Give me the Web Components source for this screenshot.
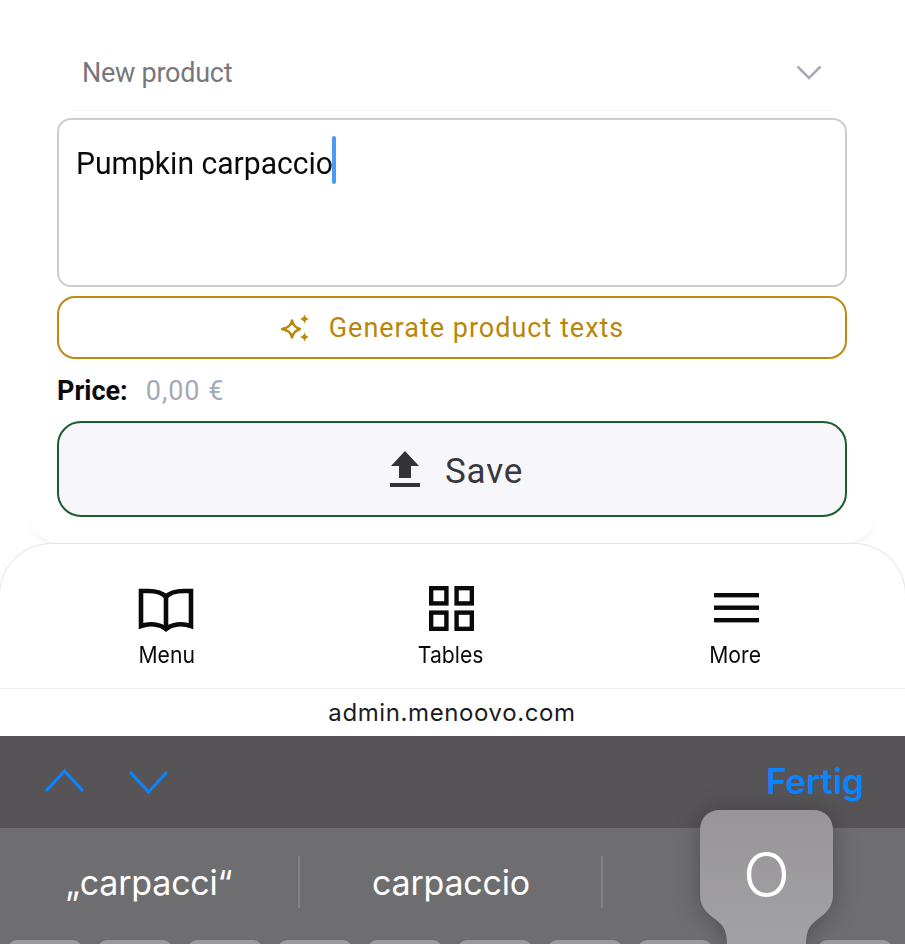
<!DOCTYPE html>
<html lang="en">
<head>
<meta charset="utf-8">
<title>Menoovo admin</title>
<style>
  html, body { margin: 0; padding: 0; background: #fff; }
  body { width: 905px; height: 944px; overflow: hidden; font-family: "Inter", "Liberation Sans", sans-serif; }
  .page { display: flex; flex-direction: column; height: 944px; overflow: hidden; position: relative; }
</style>
</head>
<body>
<div class="page">
  <product-form>
    <product-header>New product</product-header>
    <product-text>Pumpkin carpaccio</product-text>
    <ai-button>Generate product texts</ai-button>
    <price-row label="Price:" value="0,00 €"></price-row>
    <save-button>Save</save-button>
  </product-form>
  <bottom-nav>
    <nav-item icon="book">Menu</nav-item>
    <nav-item icon="grid">Tables</nav-item>
    <nav-item icon="bars">More</nav-item>
  </bottom-nav>
  <url-bar>admin.menoovo.com</url-bar>
  <kb-accessory></kb-accessory>
  <kb-suggestions></kb-suggestions>
  <key-popup>O</key-popup>
</div>
<script>
const APP_FONT = '"Roboto", "Liberation Sans", sans-serif';
const UI_FONT = '"Inter", "Liberation Sans", sans-serif';

const ICONS = {
  book: '<svg style="margin:4px 2px 0 0" width="56" height="44" viewBox="0 0 56 44" fill="none" stroke="#0a0a0a" stroke-width="4.6"><path d="M28 9C24 4 17 3 10 3H3V38C12 35 22 36 28 41C34 36 44 35 53 38V3H46C39 3 32 4 28 9V41"/></svg>',
  grid: '<svg width="45" height="45" viewBox="0 0 46 46" fill="none" stroke="#0a0a0a" stroke-width="4.5"><rect x="2.2" y="2.2" width="15.6" height="15.6"/><rect x="28.2" y="2.2" width="15.6" height="15.6"/><rect x="2.2" y="27.2" width="15.6" height="16.6"/><rect x="28.2" y="27.2" width="15.6" height="16.6"/></svg>',
  bars: '<svg style="margin-left:2px" width="45" height="46" viewBox="0 0 45 46" fill="#0a0a0a"><rect y="8" width="45" height="4.4"/><rect y="20.5" width="45" height="4.4"/><rect y="33" width="45" height="4.4"/></svg>'
};

class ProductForm extends HTMLElement {
  constructor() {
    super();
    this.attachShadow({ mode: 'open' }).innerHTML = `
      <style>
        :host { display: block; height: 543px; flex: none; overflow: hidden; font-family: ${APP_FONT}; }
        .card {
          box-sizing: border-box; height: 543px; margin: 0 30px; padding: 44px 28px 0 27px;
          background: #fff; border-radius: 0 0 30px 30px;
          box-shadow: 0 12px 14px -10px rgba(222, 214, 238, .8);
          display: flex; flex-direction: column;
        }
      </style>
      <div class="card"><slot></slot></div>`;
  }
}

class ProductHeader extends HTMLElement {
  constructor() {
    super();
    this.attachShadow({ mode: 'open' }).innerHTML = `
      <style>
        :host {
          display: flex; align-items: center; justify-content: space-between; box-sizing: border-box;
          height: 67px; margin: 0 15px 7px; padding: 0 10px 8px; border-bottom: 1px solid #f4f4f6;
          color: #77777c; font-size: 27px; letter-spacing: -.25px;
        }
        svg { display: block; }
      </style>
      <slot></slot>
      <svg width="26" height="16" viewBox="0 0 26 16" fill="none" stroke="#a6acbb" stroke-width="2.6"><path d="M1.5 1.5L13 13L24.5 1.5"/></svg>`;
  }
}

class ProductText extends HTMLElement {
  constructor() {
    super();
    this.attachShadow({ mode: 'open' }).innerHTML = `
      <style>
        :host {
          display: flex; align-items: flex-start; box-sizing: border-box; height: 169px; padding: 16px 17px;
          border: 2px solid #cdcdd0; border-radius: 14px; background: #fff;
          color: #0a0a0a; font-size: 32px; line-height: 48px; white-space: nowrap;
        }
        /* the real font runs narrower than Roboto */
        span { display: block; margin: 3px -17px 0 0; transform: scaleX(.94); transform-origin: left; }
        i { display: block; width: 3.5px; height: 48px; background: #4a9bf5; border-radius: 2px; }
      </style>
      <span><slot></slot></span><i></i>`;
  }
}

class AiButton extends HTMLElement {
  constructor() {
    super();
    this.attachShadow({ mode: 'open' }).innerHTML = `
      <style>
        :host {
          display: flex; align-items: center; justify-content: center; gap: 18px; box-sizing: border-box;
          height: 63px; margin-top: 9px; padding-top: 1px; border: 2px solid #bf8a10; border-radius: 18px;
          color: #b8860b; font-size: 27px; letter-spacing: 1px;
        }
        svg { display: block; margin-top: -1px; }
      </style>
      <svg width="31" height="30" viewBox="0 0 31 30" fill="none" stroke-linejoin="round">
        <path d="M12 7.5C13 12 15 14.5 20 16C15 17.5 13 20 12 24.5C11 20 9 17.5 2 16C9 14.5 11 12 12 7.5Z" stroke="#b8860b" stroke-width="2.4"/>
        <path d="M24.5 1C25 4 26 5.2 29 6C26 6.8 25 8 24.5 11C24 8 23 6.8 20 6C23 5.2 24 4 24.5 1Z" fill="#b8860b"/>
        <path d="M24.5 19C25 22 26 23.2 29 24C26 24.8 25 26 24.5 29C24 26 23 24.8 20 24C23 23.2 24 22 24.5 19Z" fill="#b8860b"/>
      </svg>
      <span><slot></slot></span>`;
  }
}

class PriceRow extends HTMLElement {
  constructor() {
    super();
    this.attachShadow({ mode: 'open' }).innerHTML = `
      <style>
        :host { display: flex; align-items: center; gap: 18px; height: 62px; font-size: 27px; box-sizing: border-box; padding-top: 1px; }
        b { color: #0a0a0a; font-weight: 700; }
        span { color: #a4a9b8; letter-spacing: 1px; }
      </style>
      <b></b><span></span>`;
    this.shadowRoot.querySelector('b').textContent = this.getAttribute('label');
    this.shadowRoot.querySelector('span').textContent = this.getAttribute('value');
  }
}

class SaveButton extends HTMLElement {
  constructor() {
    super();
    this.attachShadow({ mode: 'open' }).innerHTML = `
      <style>
        :host {
          display: flex; align-items: center; justify-content: center; gap: 24px; box-sizing: border-box;
          height: 96px; padding-left: 8px; border: 2px solid #1d5c2e; border-radius: 24px;
          background: #f7f6fa; color: #39383d; font-size: 35px; letter-spacing: .8px;
        }
        svg { display: block; }
        span { margin-top: 4px; }
      </style>
      <svg width="32" height="37" viewBox="0 0 32 37" fill="#333237"><path d="M16 0L30 15H22V27H10V15H2Z"/><rect x="1" y="32" width="30" height="4"/></svg>
      <span><slot></slot></span>`;
  }
}

class BottomNav extends HTMLElement {
  constructor() {
    super();
    this.attachShadow({ mode: 'open' }).innerHTML = `
      <style>
        :host {
          display: flex; box-sizing: border-box; height: 145px; flex: none; margin: 0 -1px; padding: 38px 30px 0 27px;
          justify-content: space-between;
          background: #fff; border: 1px solid #e6e5ef; border-bottom: 0; border-radius: 52px 52px 0 0;
        }
      </style>
      <slot></slot>`;
  }
}

class NavItem extends HTMLElement {
  constructor() {
    super();
    this.attachShadow({ mode: 'open' }).innerHTML = `
      <style>
        :host { display: flex; flex-direction: column; align-items: center; width: 279px; color: #0a0a0a; font-family: ${UI_FONT}; font-size: 23px; }
        .ic { height: 52px; display: flex; align-items: center; justify-content: center; }
        .lb { margin-top: 7px; line-height: 28px; transform: scaleX(.92); }
        svg { display: block; }
      </style>
      <div class="ic"></div><div class="lb"><slot></slot></div>`;
    this.shadowRoot.querySelector('.ic').innerHTML = ICONS[this.getAttribute('icon')];
  }
}

class UrlBar extends HTMLElement {
  constructor() {
    super();
    this.attachShadow({ mode: 'open' }).innerHTML = `
      <style>
        :host {
          display: flex; align-items: center; justify-content: center; box-sizing: border-box; flex: none;
          height: 48px; padding-right: 1px; background: #fff; border-top: 1px solid #efeff1;
          color: #1c1c1e; font-family: ${UI_FONT}; font-size: 24px; letter-spacing: .6px;
        }
      </style>
      <slot></slot>`;
  }
}

class KbAccessory extends HTMLElement {
  constructor() {
    super();
    this.attachShadow({ mode: 'open' }).innerHTML = `
      <style>
        :host {
          display: flex; align-items: center; box-sizing: border-box; flex: none; height: 92px;
          padding: 0 41px 2px 45px; background: #565457; font-family: ${UI_FONT};
        }
        .arrows { display: flex; gap: 45px; flex: 1; }
        svg { display: block; }
        svg + svg { margin-top: 3px; }
        .done { color: #0a84ff; font-size: 35px; font-weight: 600; }
      </style>
      <div class="arrows">
        <svg width="39" height="24" viewBox="0 0 39 24" fill="none" stroke="#0a84ff" stroke-width="3.2" stroke-linecap="round"><path d="M2 22L19.5 3L37 22"/></svg>
        <svg width="39" height="24" viewBox="0 0 39 24" fill="none" stroke="#0a84ff" stroke-width="3.2" stroke-linecap="round"><path d="M2 2L19.5 21L37 2"/></svg>
      </div>
      <div class="done">Fertig</div>`;
  }
}

class KbSuggestions extends HTMLElement {
  constructor() {
    super();
    this.attachShadow({ mode: 'open' }).innerHTML = `
      <style>
        :host { display: block; box-sizing: border-box; flex: none; height: 116px; background: #6e6d70; font-family: ${UI_FONT}; color: #fff; overflow: hidden; }
        .row { display: grid; grid-template-columns: 298px 303px 1fr; height: 112px; align-items: start; }
        .cell { height: 52px; margin-top: 28px; display: flex; align-items: center; justify-content: center; font-size: 34px; letter-spacing: -.2px; }
        .cell + .cell { border-left: 2px solid #838285; }
        .keys { display: grid; grid-template-columns: repeat(10, 74px); column-gap: 16px; padding-left: 8px; }
        .keys i { height: 20px; background: #9a999c; border-radius: 9px 9px 0 0; }
      </style>
      <div class="row">
        <div class="cell">„carpacci“</div>
        <div class="cell" style="padding-left:1px">carpaccio</div>
        <div class="cell"></div>
      </div>
      <div class="keys"><i></i><i></i><i></i><i></i><i></i><i></i><i></i><i></i><i style="visibility:hidden"></i><i></i></div>`;
  }
}

class KeyPopup extends HTMLElement {
  constructor() {
    super();
    this.attachShadow({ mode: 'open' }).innerHTML = `
      <style>
        :host { position: absolute; left: 700px; top: 810px; width: 133px; height: 134px; display: block; font-family: ${UI_FONT}; color: #fff; }
        svg { position: absolute; inset: 0; filter: drop-shadow(0 2px 12px rgba(0,0,0,.28)); }
        .ch { position: absolute; left: 0; right: 0; top: 30px; text-align: center; font-size: 62px; line-height: 70px; font-weight: 300; }
      </style>
      <svg width="133" height="134" viewBox="0 0 133 134">
        <defs><linearGradient id="g" x1="0" y1="0" x2="0" y2="1"><stop offset="0" stop-color="#979598"/><stop offset="1" stop-color="#a2a1a4"/></linearGradient></defs>
        <path fill="url(#g)" d="M20 0H113C125 0 133 8 133 20V85C133 97 126 103 118 109C110 115 106 120 106 134H27C27 120 23 115 15 109C7 103 0 97 0 85V20C0 8 8 0 20 0Z"/>
      </svg>
      <div class="ch"><slot></slot></div>`;
  }
}

customElements.define('product-form', ProductForm);
customElements.define('product-header', ProductHeader);
customElements.define('product-text', ProductText);
customElements.define('ai-button', AiButton);
customElements.define('price-row', PriceRow);
customElements.define('save-button', SaveButton);
customElements.define('bottom-nav', BottomNav);
customElements.define('nav-item', NavItem);
customElements.define('url-bar', UrlBar);
customElements.define('kb-accessory', KbAccessory);
customElements.define('kb-suggestions', KbSuggestions);
customElements.define('key-popup', KeyPopup);
</script>
</body>
</html>
